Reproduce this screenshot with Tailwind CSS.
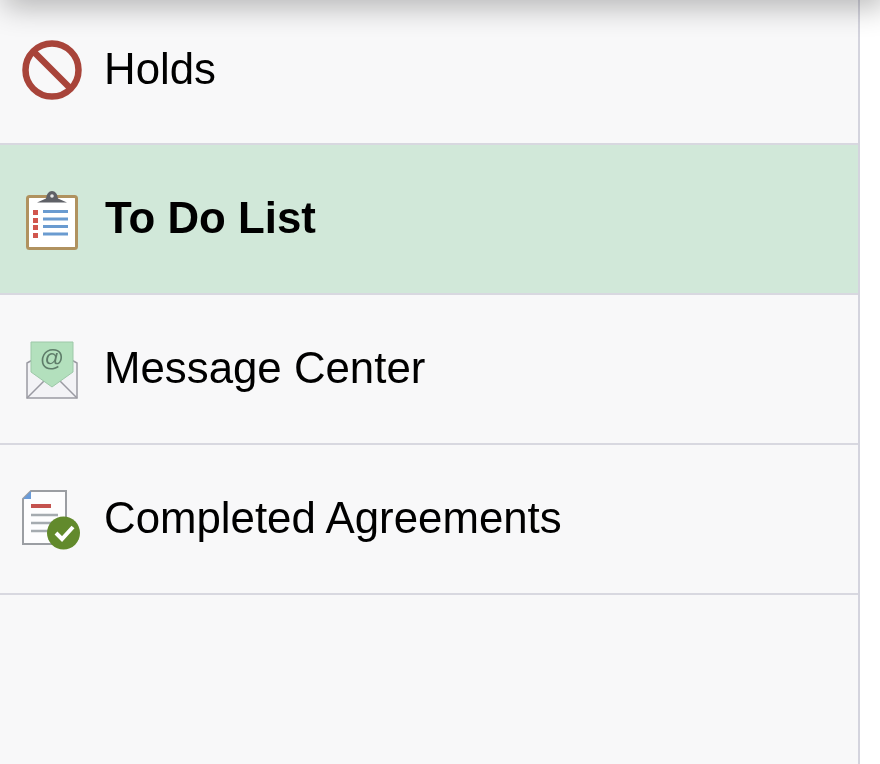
<!DOCTYPE html>
<html>
<head>
<meta charset="utf-8">
<script src="https://cdn.jsdelivr.net/npm/@tailwindcss/browser@4"></script>
</head>
<body class="bg-white overflow-hidden">
<div class="relative h-[764px] w-[880px] overflow-hidden bg-white font-['Liberation_Sans',Arial,sans-serif] text-[43.8px] text-black">
  <div class="absolute -top-[20px] left-[10px] right-[0px] h-[20px] bg-black/40 shadow-[0_0_30px_6px_rgba(0,0,0,0.3)] z-10"></div>
  <div class="h-full w-[860px] border-r-[2px] border-[#d4d4de] bg-[#f8f8f9] blur-[0.7px]">
    <div class="flex h-[145px] items-center gap-[21px] border-b-[2px] border-[#d8d8e0] pl-[21px]">
      <svg class="w-[62px] h-[62px] -mt-[3px]" viewBox="0 0 62 62"><circle cx="31" cy="31" r="26.5" fill="none" stroke="#a8443a" stroke-width="6.5"/><path d="M13 13L49 49" stroke="#a8443a" stroke-width="6.5"/></svg>
      <span class="-mt-[5px]">Holds</span>
    </div>
    <div class="flex h-[150px] items-center gap-[27px] border-b-[2px] border-[#d8d8e0] bg-[#d1e8d9] pl-[26px] font-bold">
      <svg class="w-[52px] h-[62px] mt-[4px]" viewBox="0 0 52 62"><rect x="1.5" y="6.5" width="49" height="52" rx="2" fill="#fff" stroke="#b0925f" stroke-width="3"/><path d="M11 12.5L20 8.5Q21 1 26 1T32 8.5L41 12.5Z" fill="#5f6167"/><circle cx="26" cy="6" r="1.8" fill="#e8e8e8"/><g fill="#d1564e"><rect x="7" y="20" width="5" height="5"/><rect x="7" y="28" width="5" height="5"/><rect x="7" y="35" width="5" height="5"/><rect x="7" y="43" width="5" height="5"/></g><g stroke="#6a9bd0" stroke-width="3"><path d="M17 21.5H42M17 29H42M17 36.5H42M17 44H42"/></g></svg>
      <span class="-mt-[2px]">To Do List</span>
    </div>
    <div class="flex h-[150px] items-center gap-[26px] border-b-[2px] border-[#d8d8e0] pl-[26px]">
      <svg class="w-[52px] h-[58px] mt-[2px]" viewBox="0 0 52 58"><path d="M1 57V22L26 8L51 22V57Z" fill="#f3f3f6" stroke="#9a9aa2" stroke-width="1.5"/><path d="M1 57L20 38M51 57L32 38" stroke="#9a9aa2" stroke-width="1.5"/><path d="M5 1H47V31L26 46L5 31Z" fill="#b3e0bd" stroke="#9dc8a8"/><text x="26" y="25" text-anchor="middle" font-size="24" fill="#5f7d6a" font-family="Liberation Sans">@</text></svg>
      <span class="-mt-[2px]">Message Center</span>
    </div>
    <div class="flex h-[150px] items-center gap-[23px] border-b-[2px] border-[#d8d8e0] pl-[22px]">
      <svg class="w-[59px] h-[62px] mt-[2px]" viewBox="0 0 59 62"><path d="M9 2H44V55H1V10Z" fill="#fdfdfe" stroke="#9b9ea3" stroke-width="2"/><path d="M9 2V10H1Z" fill="#6a9bd8"/><rect x="9" y="15" width="20" height="4" fill="#c4524e"/><path d="M9 26H36M9 34H36M9 42H30" stroke="#a5abb0" stroke-width="2.5"/><circle cx="41.5" cy="44" r="16.5" fill="#628a2c"/><path d="M34 44L40 50L51 38" fill="none" stroke="#fff" stroke-width="4"/></svg>
      <span class="-mt-[2px]">Completed Agreements</span>
    </div>
  </div>
</div>
</body>
</html>
